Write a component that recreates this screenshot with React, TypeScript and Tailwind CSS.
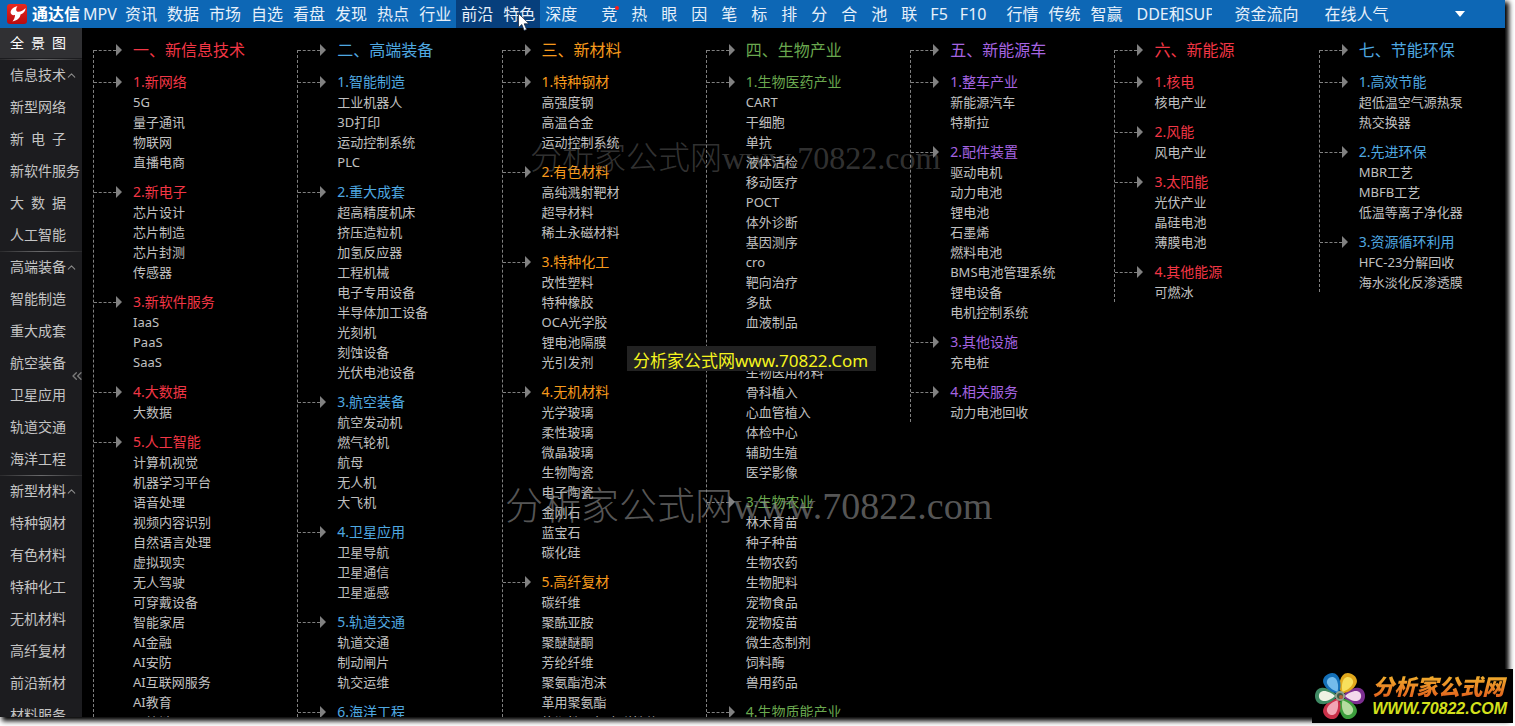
import React from 'react';
import { ChevronUp, ChevronsLeft } from 'lucide-react';

type Group = { title: string; items: string[] };
type Chain = { title: string; color: string; groups: Group[] };

const MAIN_MENU = ['资讯', '数据', '市场', '自选', '看盘', '发现', '热点', '行业', '前沿', '特色', '深度'];
const TOOL_MENU = ['竞', '热', '眼', '因', '笔', '标', '排', '分', '合', '池', '联', 'F5', 'F10'];

const SIDE_ITEMS = [
  { label: '信息技术', section: true },
  { label: '新型网络' },
  { label: '新\u2002电\u2002子' },
  { label: '新软件服务' },
  { label: '大\u2002数\u2002据' },
  { label: '人工智能' },
  { label: '高端装备', section: true },
  { label: '智能制造' },
  { label: '重大成套' },
  { label: '航空装备' },
  { label: '卫星应用' },
  { label: '轨道交通' },
  { label: '海洋工程' },
  { label: '新型材料', section: true },
  { label: '特种钢材' },
  { label: '有色材料' },
  { label: '特种化工' },
  { label: '无机材料' },
  { label: '高纤复材' },
  { label: '前沿新材' },
  { label: '材料服务' },
];

const CHAINS: Chain[] = [
  {
    title: '一、新信息技术',
    color: 'text-[#f23645]',
    groups: [
      { title: '1.新网络', items: ['5G', '量子通讯', '物联网', '直播电商'] },
      { title: '2.新电子', items: ['芯片设计', '芯片制造', '芯片封测', '传感器'] },
      { title: '3.新软件服务', items: ['IaaS', 'PaaS', 'SaaS'] },
      { title: '4.大数据', items: ['大数据'] },
      {
        title: '5.人工智能',
        items: ['计算机视觉', '机器学习平台', '语音处理', '视频内容识别', '自然语言处理', '虚拟现实', '无人驾驶', '可穿戴设备', '智能家居', 'AI金融', 'AI安防', 'AI互联网服务', 'AI教育', '区块链'],
      },
    ],
  },
  {
    title: '二、高端装备',
    color: 'text-[#4fa8e0]',
    groups: [
      { title: '1.智能制造', items: ['工业机器人', '3D打印', '运动控制系统', 'PLC'] },
      {
        title: '2.重大成套',
        items: ['超高精度机床', '挤压造粒机', '加氢反应器', '工程机械', '电子专用设备', '半导体加工设备', '光刻机', '刻蚀设备', '光伏电池设备'],
      },
      { title: '3.航空装备', items: ['航空发动机', '燃气轮机', '航母', '无人机', '大飞机'] },
      { title: '4.卫星应用', items: ['卫星导航', '卫星通信', '卫星遥感'] },
      { title: '5.轨道交通', items: ['轨道交通', '制动闸片', '轨交运维'] },
      { title: '6.海洋工程', items: [] },
    ],
  },
  {
    title: '三、新材料',
    color: 'text-[#f79a1c]',
    groups: [
      { title: '1.特种钢材', items: ['高强度钢', '高温合金', '运动控制系统'] },
      { title: '2.有色材料', items: ['高纯溅射靶材', '超导材料', '稀土永磁材料'] },
      { title: '3.特种化工', items: ['改性塑料', '特种橡胶', 'OCA光学胶', '锂电池隔膜', '光引发剂'] },
      {
        title: '4.无机材料',
        items: ['光学玻璃', '柔性玻璃', '微晶玻璃', '生物陶瓷', '电子陶瓷', '金刚石', '蓝宝石', '碳化硅'],
      },
      {
        title: '5.高纤复材',
        items: ['碳纤维', '聚酰亚胺', '聚醚醚酮', '芳纶纤维', '聚氨酯泡沫', '革用聚氨酯', '热塑性聚氨酯弹性体'],
      },
    ],
  },
  {
    title: '四、生物产业',
    color: 'text-[#6aa84f]',
    groups: [
      {
        title: '1.生物医药产业',
        items: ['CART', '干细胞', '单抗', '液体活检', '移动医疗', 'POCT', '体外诊断', '基因测序', 'cro', '靶向治疗', '多肽', '血液制品'],
      },
      {
        title: '',
        items: ['生物医用材料', '骨科植入', '心血管植入', '体检中心', '辅助生殖', '医学影像'],
      },
      {
        title: '3.生物农业',
        items: ['林木育苗', '种子种苗', '生物农药', '生物肥料', '宠物食品', '宠物疫苗', '微生态制剂', '饲料酶', '兽用药品'],
      },
      { title: '4.生物质能产业', items: [] },
    ],
  },
  {
    title: '五、新能源车',
    color: 'text-[#a564e0]',
    groups: [
      { title: '1.整车产业', items: ['新能源汽车', '特斯拉'] },
      {
        title: '2.配件装置',
        items: ['驱动电机', '动力电池', '锂电池', '石墨烯', '燃料电池', 'BMS电池管理系统', '锂电设备', '电机控制系统'],
      },
      { title: '3.其他设施', items: ['充电桩'] },
      { title: '4.相关服务', items: ['动力电池回收'] },
    ],
  },
  {
    title: '六、新能源',
    color: 'text-[#f23645]',
    groups: [
      { title: '1.核电', items: ['核电产业'] },
      { title: '2.风能', items: ['风电产业'] },
      { title: '3.太阳能', items: ['光伏产业', '晶硅电池', '薄膜电池'] },
      { title: '4.其他能源', items: ['可燃冰'] },
    ],
  },
  {
    title: '七、节能环保',
    color: 'text-[#4fa8e0]',
    groups: [
      { title: '1.高效节能', items: ['超低温空气源热泵', '热交换器'] },
      { title: '2.先进环保', items: ['MBR工艺', 'MBFB工艺', '低温等离子净化器'] },
      { title: '3.资源循环利用', items: ['HFC-23分解回收', '海水淡化反渗透膜'] },
    ],
  },
];

const PETALS = [
  { angle: 90, fill: '#7d2f91', inner: '#f3d9ec' },
  { angle: 150, fill: '#3c9e3c', inner: '#b5dca0' },
  { angle: 210, fill: '#c93048', inner: '#f2a6b4' },
  { angle: 270, fill: '#3f8a64', inner: '#eef2e4' },
  { angle: 30, fill: '#e0a81c', inner: '#f8e05c' },
  { angle: -30, fill: '#1470b8', inner: '#74bcec' },
];

const Connector = () => (
  <span className="flex w-[39px] shrink-0 items-center" aria-hidden="true">
    <span className="w-[22px] border-t border-dashed border-[#808080]" />
    <svg width="6" height="12" viewBox="0 0 6 12">
      <path d="M0 0 L6 6 L0 12 Z" fill="#808080" />
    </svg>
  </span>
);

const ChainColumn = ({ chain }: { chain: Chain }) => (
  <section className="flex min-w-0 items-stretch self-start">
    <div className="mt-[10px] border-l border-dashed border-[#808080]" />
    <div className="min-w-0 flex-1 whitespace-nowrap">
      <h2 className={`mb-3 flex h-5 items-center text-base leading-5 ${chain.color}`}>
        <Connector />
        {chain.title}
      </h2>
      <div className="flex flex-col gap-[10px]">
        {chain.groups.map((group) => (
          <div key={group.title}>
            <h3 className={`flex h-5 items-center text-sm leading-5 ${chain.color}`}>
              <Connector />
              {group.title}
            </h3>
            <ul className="pl-[39px] text-[13px] leading-5 text-[#c0c0c0]">
              {group.items.map((item) => (
                <li key={item}>{item}</li>
              ))}
            </ul>
          </div>
        ))}
      </div>
    </div>
  </section>
);

const TopBar = () => (
  <header className="relative flex h-7 shrink-0 items-center overflow-hidden whitespace-nowrap bg-[#0d67b5] text-base leading-7 text-[#e6f0fa]">
    <svg className="ml-[7px] shrink-0" width="20" height="20" viewBox="0 0 20 20">
      <defs>
        <linearGradient id="brand" x1="0" y1="0" x2="0" y2="1">
          <stop offset="0" stopColor="#e8281e" />
          <stop offset="1" stopColor="#b80c10" />
        </linearGradient>
      </defs>
      <rect width="20" height="20" rx="3" fill="url(#brand)" />
      <path d="M10.5 2 C7 3 4 5 3.600 8 C3.400 10.500 5.500 11.500 8 11 C8 13.500 7 15.500 5.500 17.500 C9.500 16.500 13 14.500 13.500 10.500 C16.500 9.500 18.500 7 18.600 4 C16.500 6.500 14 7.600 11.500 7.800 C8.800 7.800 8.500 5 10.500 2 Z" fill="#fff" />
    </svg>
    <span className="ml-[5px] font-bold text-white">通达信</span>
    <button className="w-10 text-center">MPV</button>
    <nav className="flex">
      {MAIN_MENU.map((item) => (
        <button
          key={item}
          className={`px-[5px] ${item === '前沿' || item === '特色' ? 'bg-[#073f7c]' : ''}`}
        >
          {item}
        </button>
      ))}
    </nav>
    <nav className="ml-3 flex">
      {TOOL_MENU.map((item) => (
        <button key={item} className={`relative ${item.length > 1 ? 'px-[6px]' : 'px-[7px]'}`}>
          {item}
          {item === '竞' && <span className="absolute right-[5px] top-[6px] size-1 rounded-full bg-[#ff1a1a]" />}
        </button>
      ))}
    </nav>
    <nav className="ml-[9px] flex">
      <button className="px-[5px]">行情</button>
      <button className="px-[5px]">传统</button>
      <button className="px-[5px]">智赢</button>
      <button className="ml-[9px] w-[76px] overflow-hidden text-left">DDE和SUP</button>
      <button className="ml-[22px]">资金流向</button>
      <button className="ml-[26px]">在线人气</button>
    </nav>
    <button className="ml-auto mr-10" aria-label="更多">
      <svg width="10" height="6" viewBox="0 0 10 6">
        <path d="M0 0 H10 L5 6 Z" fill="#fff" />
      </svg>
    </button>
  </header>
);

const Sidebar = () => (
  <aside className="relative flex w-[82px] shrink-0 flex-col overflow-hidden whitespace-nowrap bg-[#1c1c1f] text-sm text-[#c4c4c4]">
    <button className="mb-px h-[30px] shrink-0 bg-[#303033] pl-[10px] text-left text-white">{'全\u2002景\u2002图'}</button>
    {SIDE_ITEMS.map((item) => (
      <button
        key={item.label}
        className={`flex h-8 shrink-0 items-center pl-[10px] text-left ${item.section ? 'bg-[linear-gradient(to_right,#2a2a2c,#6a6a6c,#2a2a2c)] bg-[length:100%_1px] bg-no-repeat' : ''}`}
      >
        {item.label}
        {item.section && <ChevronUp size={13} strokeWidth={2} className="-ml-px text-[#8a8a8a]" />}
      </button>
    ))}
    <button className="absolute right-0 top-[340px] text-[#7a7a7a]" aria-label="收起">
      <ChevronsLeft size={16} strokeWidth={2} className="-mr-[3px]" />
    </button>
  </aside>
);

const SiteBadge = () => (
  <div className="absolute bottom-[3px] right-[2px] flex h-[54px] items-center bg-black pl-[2px] pr-[6px]">
    <svg width="52" height="52" viewBox="-26 -26 52 52">
      {PETALS.map((p) => (
        <g key={p.angle} transform={`rotate(${p.angle})`}>
          <path d="M0 -3 C-5 -6 -9 -13 -8 -19 C-7 -27 7 -27 8 -19 C9 -13 5 -6 0 -3 Z" fill={p.fill} />
          <path d="M0 -5 C-3 -8 -5.500 -13 -5 -17 C-4 -22.500 4 -22.500 5 -17 C5.500 -13 3 -8 0 -5 Z" fill={p.inner} />
        </g>
      ))}
      <circle r="5" fill="#8fa08c" />
      <circle r="3" fill="#3d5a44" />
      <circle cx="1" cy="1" r="2" fill="#b8643c" />
    </svg>
    <div className="ml-[6px] flex flex-col italic">
      <span className="bg-gradient-to-b from-[#f0b830] to-[#e05a1c] bg-clip-text text-[22px] font-black leading-[26px] text-transparent">
        分析家公式网
      </span>
      <span className="font-['Liberation_Sans',sans-serif] text-base font-bold leading-5 text-[#d4e01c]">WWW.70822.COM</span>
    </div>
  </div>
);

const App: React.FC = () => {
  return (
    <div className="relative flex h-screen overflow-hidden bg-white pb-[9px] pr-[10px] font-['Noto_Sans','Noto_Sans_CJK_SC',sans-serif]">
      <div className="flex min-w-0 flex-1 flex-col bg-black shadow-[3px_3px_5px_1px_#000000]">
        <TopBar />
        <div className="flex min-h-0 flex-1">
          <Sidebar />
          <main className="min-w-0 flex-1 overflow-hidden pl-[11px] pt-3">
            <div className="-mr-[18px] grid grid-cols-7">
              {CHAINS.map((chain) => (
                <ChainColumn key={chain.title} chain={chain} />
              ))}
            </div>
          </main>
        </div>
      </div>

      <p className="pointer-events-none absolute left-[530px] top-[138px] font-['Liberation_Serif','Noto_Sans_CJK_SC',serif] text-[32px] font-light leading-10 text-[#808080]/40">
        分析家公式网www.70822.com
      </p>
      <p className="pointer-events-none absolute left-[505px] top-[484px] font-['Liberation_Serif','Noto_Sans_CJK_SC',serif] text-[38px] font-light leading-[44px] text-[#909090]/60">
        分析家公式网www.70822.com
      </p>
      <p className="absolute left-[627px] top-[346px] bg-[#222222] pl-[6px] pr-2 pt-1 text-[17px] leading-[21px] text-[#f5f51e]">
        分析家公式网www.70822.Com
      </p>

      <svg className="pointer-events-none absolute left-[518px] top-[13px]" width="12" height="19" viewBox="0 0 12 19">
        <path d="M.5 .5 V14.500 L3.800 11.500 L6.200 17.500 L8.600 16.500 L6.200 10.800 H11 Z" fill="#fff" stroke="#1a2a40" strokeWidth=".8" />
      </svg>

      <SiteBadge />
    </div>
  );
};

export default App;
